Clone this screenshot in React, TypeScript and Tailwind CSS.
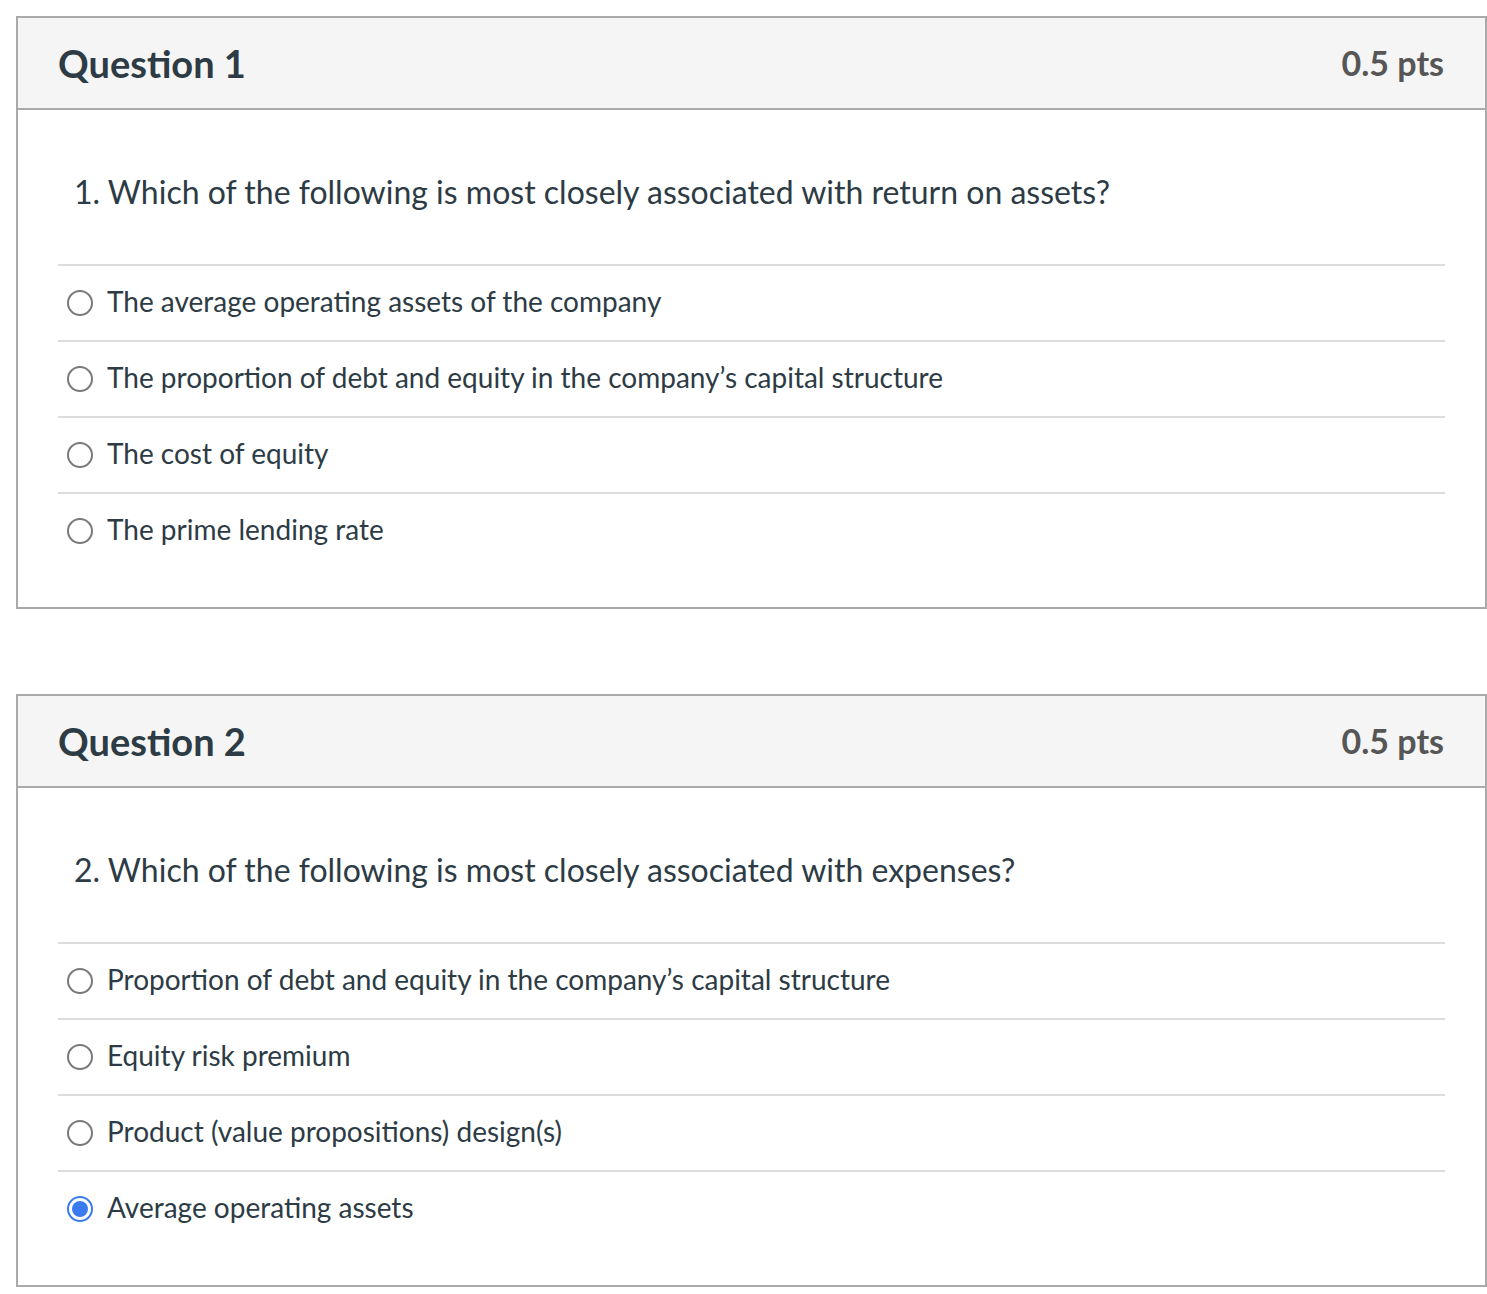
import React from "react";

type Question = {
  n: number;
  text: string;
  answers: string[];
  selected?: number;
};

const questions: Question[] = [
  {
    n: 1,
    text: "1. Which of the following is most closely associated with return on assets?",
    answers: [
      "The average operating assets of the company",
      "The proportion of debt and equity in the company\u2019s capital structure",
      "The cost of equity",
      "The prime lending rate",
    ],
  },
  {
    n: 2,
    text: "2. Which of the following is most closely associated with expenses?",
    answers: [
      "Proportion of debt and equity in the company\u2019s capital structure",
      "Equity risk premium",
      "Product (value propositions) design(s)",
      "Average operating assets",
    ],
    selected: 3,
  },
];

function Radio({ checked }: { checked: boolean }) {
  if (checked) {
    return (
      <span className="flex h-[26px] w-[26px] shrink-0 items-center justify-center rounded-full border-2 border-[#3b7bf0] bg-white">
        <span className="h-[16px] w-[16px] rounded-full bg-[#3b7bf0]" />
      </span>
    );
  }
  return <span className="h-[26px] w-[26px] shrink-0 rounded-full border-2 border-[#7a7a7a] bg-white" />;
}

function QuestionCard({ q }: { q: Question }) {
  return (
    <div className="w-[1471px] border-2 border-[#aaaaaa] bg-white">
      {/* header */}
      <div className="flex h-[92px] items-center justify-between border-b-2 border-[#aaaaaa] bg-[#f5f5f5] pl-[40px] pr-[41px]">
        <h2 className="text-[38px] font-bold leading-none text-[#2d3b45]">Question {q.n}</h2>
        <span className="text-[34px] font-bold leading-none text-[#565656]">0.5 pts</span>
      </div>

      {/* body */}
      <div className="px-[40px] pb-[39px] pt-[62px]">
        <p className="pl-[16px] text-[32px] leading-[40px] text-[#2d3b45]">{q.text}</p>
        <div className="mt-[52px]">
          {q.answers.map((a, i) => (
            <div
              key={a}
              className="flex h-[76px] items-center gap-[14px] border-t-2 border-[#dcdcdc] pl-[9px]"
            >
              <Radio checked={q.selected === i} />
              <span className="pb-[4px] text-[28px] leading-none text-[#2d3b45]">{a}</span>
            </div>
          ))}
        </div>
      </div>
    </div>
  );
}

export default function App() {
  return (
    <div
      className="min-h-screen bg-white pl-[16px] pt-[16px]"
      style={{ fontFamily: "Lato, 'Noto Sans', sans-serif" }}
    >
      <div className="flex flex-col gap-[85px]">
        {questions.map((q) => (
          <QuestionCard key={q.n} q={q} />
        ))}
      </div>
    </div>
  );
}
